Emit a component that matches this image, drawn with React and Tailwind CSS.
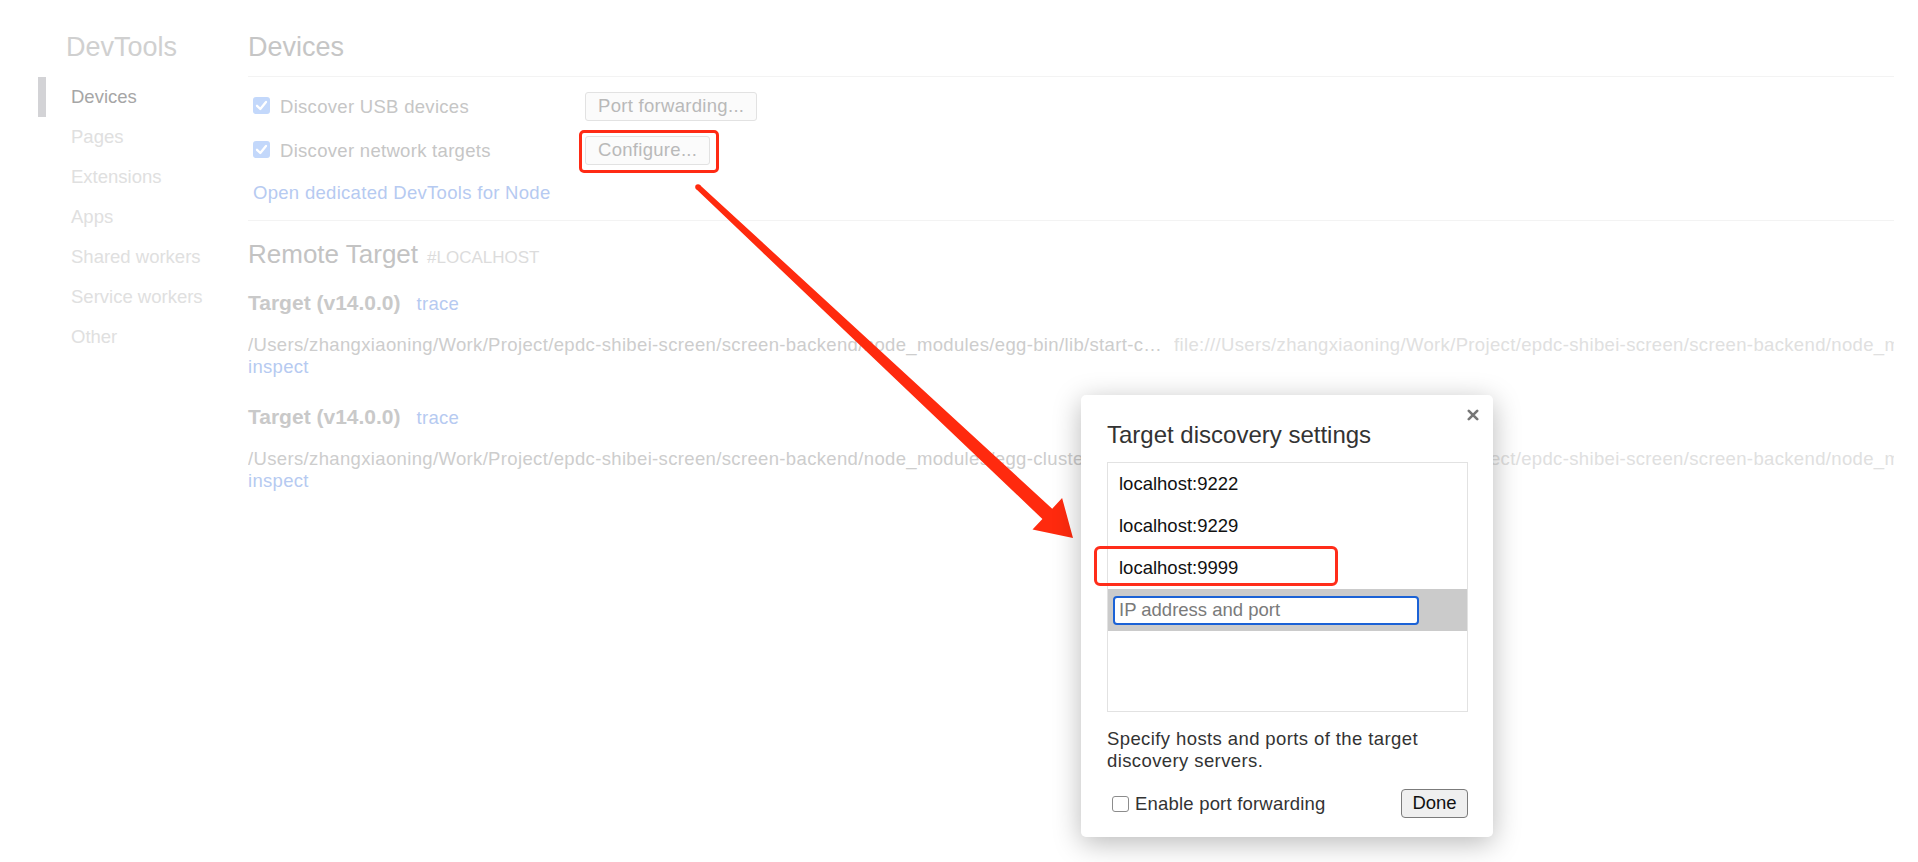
import React from "react";

const font = { fontFamily: "'Liberation Sans', Arial, sans-serif" };

const sideItems = ["Devices", "Pages", "Extensions", "Apps", "Shared workers", "Service workers", "Other"];

const targets = [
  {
    path: "/Users/zhangxiaoning/Work/Project/epdc-shibei-screen/screen-backend/node_modules/egg-bin/lib/start-cluster",
    url: "file:///Users/zhangxiaoning/Work/Project/epdc-shibei-screen/screen-backend/node_modules/egg-bin/lib/start-cluster",
  },
  {
    path: "/Users/zhangxiaoning/Work/Project/epdc-shibei-screen/screen-backend/node_modules/egg-cluster/lib/app_worker.js",
    url: "file:///Users/zhangxiaoning/Work/Project/epdc-shibei-screen/screen-backend/node_modules/egg-cluster/lib/app_worker.js",
  },
];

const BlueCheck = () => (
  <svg width="17" height="17" viewBox="0 0 17 17" className="shrink-0 -translate-y-[1px]">
    <rect x="0" y="0" width="17" height="17" rx="3" fill="#c3d8fb" />
    <polyline points="4,8.8 7.3,12 13,5" fill="none" stroke="#fff" strokeWidth="2.3" strokeLinecap="round" strokeLinejoin="round" />
  </svg>
);

const GhostButton = ({ children }) => (
  <button className="h-[29px] px-[12px] border border-[#e2e2e2] bg-[#fbfbfb] rounded-[3px] text-[18.5px] tracking-[0.3px] leading-none text-[#b9b9b9]">
    {children}
  </button>
);

const Sidebar = () => (
  <div className="w-[248px] shrink-0 pt-[33px]">
    <h1 className="pl-[66px] text-[27px] leading-[28px] text-[#d0d0d0] font-normal">DevTools</h1>
    <div className="mt-[16px]">
      {sideItems.map((item, i) => (
        <div key={item} className="flex h-[40px] items-center">
          <div className={`ml-[38px] w-[8px] h-[40px] ${i === 0 ? "bg-[#d3d3d6]" : ""}`} />
          <span className={`pl-[25px] text-[18.5px] ${i === 0 ? "text-[#a6a6a6]" : "text-[#e0e0e0]"}`}>{item}</span>
        </div>
      ))}
    </div>
  </div>
);

const TargetBlock = ({ t, first }) => (
  <div className={first ? "mt-[20px]" : "mt-[25px]"}>
    <div className="flex items-baseline h-[28px] leading-[28px]">
      <span className="text-[21px] font-bold text-[#c9c9c9]">Target (v14.0.0)</span>
      <span className="ml-[16px] text-[18.5px] tracking-[0.3px] text-[#b6caf1]">trace</span>
    </div>
    <div className="mt-[17px] flex whitespace-nowrap text-[18.5px] leading-[22px] tracking-[0.35px]">
      <span className="w-[916px] shrink-0 overflow-hidden text-ellipsis text-[#cdcdcd]">{t.path}</span>
      <span className="ml-[10px] min-w-0 overflow-hidden text-[#e0e0e0]">{t.url}</span>
    </div>
    <div className="text-[18.5px] leading-[22px] tracking-[0.3px] text-[#b6caf1]">inspect</div>
  </div>
);

const Main = () => (
  <div className="flex-1 min-w-0 pt-[33px] pr-[24px]">
    <h1 className="text-[27px] leading-[28px] text-[#c6c6c6] font-normal">Devices</h1>
    <div className="mt-[15px] h-px bg-[#f3f3f3]" />
    <div className="pt-[7px]">
      <div className="flex h-[44px] items-center">
        <div className="w-[337px] flex items-center pl-[5px]">
          <BlueCheck />
          <span className="ml-[10px] text-[18.5px] tracking-[0.3px] text-[#c6c6c6] translate-y-[1px]">Discover USB devices</span>
        </div>
        <GhostButton>Port forwarding...</GhostButton>
      </div>
      <div className="flex h-[44px] items-center">
        <div className="w-[337px] flex items-center pl-[5px]">
          <BlueCheck />
          <span className="ml-[10px] text-[18.5px] tracking-[0.3px] text-[#c6c6c6] translate-y-[1px]">Discover network targets</span>
        </div>
        <div className="relative">
          <GhostButton>Configure...</GhostButton>
          <div className="absolute -left-[6px] -right-[9px] -top-[6px] -bottom-[8px] border-[3px] border-[#ff2a14] rounded-[5px]" />
        </div>
      </div>
    </div>
    <div className="mt-[7px] h-[28px] leading-[28px] pl-[5px] text-[18.5px] tracking-[0.3px] text-[#b6caf1]">Open dedicated DevTools for Node</div>
    <div className="mt-[13px] h-px bg-[#f3f3f3]" />
    <div className="mt-[18px] flex items-baseline h-[30px] leading-[30px]">
      <span className="text-[26px] text-[#c3c3c3]">Remote Target</span>
      <span className="ml-[9px] text-[17px] text-[#dcdcdc]">#LOCALHOST</span>
    </div>
    {targets.map((t, i) => (
      <TargetBlock key={i} t={t} first={i === 0} />
    ))}
  </div>
);

const Arrow = () => (
  <svg className="absolute inset-0 pointer-events-none" width="1918" height="862" viewBox="0 0 1918 862">
    <polygon
      points="699.9,184.9 1052.2,508.8 1062.1,498 1073,538 1032.5,529.6 1042.4,519 696.1,189.1"
      fill="#ff2a0e"
    />
    <circle cx="698" cy="187" r="2.8" fill="#ff2a0e" />
  </svg>
);

const Dialog = () => (
  <div className="absolute left-[1081px] top-[395px] w-[412px] bg-white rounded-[5px] shadow-[0_6px_28px_rgba(0,0,0,0.28)] pt-[26px] pl-[26px] pr-[25px] pb-[19px]">
    <button className="absolute top-[14px] right-[14px]">
      <svg width="12" height="12" viewBox="0 0 12 12">
        <path d="M1.8 1.8 L10.2 10.2 M10.2 1.8 L1.8 10.2" stroke="#777" strokeWidth="2.6" strokeLinecap="round" />
      </svg>
    </button>
    <h2 className="text-[24px] leading-[28px] text-[#333] font-normal">Target discovery settings</h2>
    <div className="mt-[13px] h-[250px] border border-[#e2e2e2]">
      {["localhost:9222", "localhost:9229", "localhost:9999"].map((h) => (
        <div key={h} className="h-[42px] flex items-center pl-[11px] text-[18.5px] text-[#111]">{h}</div>
      ))}
      <div className="h-[42px] bg-[#cbcbcb] flex items-center pl-[5px]">
        <input
          placeholder="IP address and port"
          className="w-[306px] h-[29px] border-2 border-[#1b62d6] rounded-[4px] bg-white px-[4px] text-[18.5px] outline-none placeholder:text-[#7a7a7a]"
          style={font}
        />
      </div>
    </div>
    <p className="mt-[16px] text-[18.5px] leading-[22px] tracking-[0.4px] text-[#333]">Specify hosts and ports of the target discovery servers.</p>
    <div className="mt-[17px] flex items-center justify-between h-[29px]">
      <label className="flex items-center">
        <span className="ml-[5px] w-[17px] h-[16px] border border-[#8c8c8c] rounded-[3px] bg-white" />
        <span className="ml-[6px] text-[18.5px] tracking-[0.2px] text-[#333]">Enable port forwarding</span>
      </label>
      <button className="w-[67px] h-[29px] bg-[#efefef] border border-[#7b7b7b] rounded-[4px] text-[18.5px] leading-none text-[#111]">Done</button>
    </div>
    <div className="absolute left-[13px] top-[151px] w-[244px] h-[40px] border-[3px] border-[#ff2d1a] rounded-[6px]" />
  </div>
);

export default function App() {
  return (
    <div className="relative w-[1918px] h-[862px] overflow-hidden bg-white" style={font}>
      <div className="flex">
        <Sidebar />
        <Main />
      </div>
      <Arrow />
      <Dialog />
    </div>
  );
}
